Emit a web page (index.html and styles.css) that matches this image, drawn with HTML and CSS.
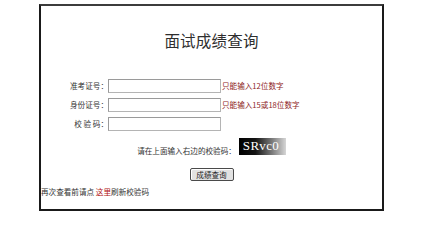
FILE: index.html
```html
<!DOCTYPE html>
<html lang="zh-CN">
<head>
<meta charset="utf-8">
<title>面试成绩查询</title>
<link rel="stylesheet" href="styles.css">
</head>
<body>
<div class="frame">
  <h1 class="title">面试成绩查询</h1>
  <div class="form">
    <div class="row">
      <label class="label">准考证号：</label>
      <input class="field" type="text">
      <span class="hint">只能输入12位数字</span>
    </div>
    <div class="row">
      <label class="label">身份证号：</label>
      <input class="field" type="text">
      <span class="hint">只能输入15或18位数字</span>
    </div>
    <div class="row">
      <label class="label">校&nbsp;验&nbsp;码：</label>
      <input class="field" type="text">
      <span class="hint"></span>
    </div>
  </div>
  <div class="verify">
    <span class="verify-text">请在上面输入右边的校验码：</span>
    <span class="captcha">SRvc0</span>
  </div>
  <div class="submit">
    <button class="btn" type="button">成绩查询</button>
  </div>
  <p class="note">再次查看前请点 <a class="link" href="#">这里</a>刷新校验码</p>
</div>
</body>
</html>
```

FILE: styles.css
```css
html, body {
  margin: 0;
  padding: 0;
  background: #ffffff;
}

body {
  font-family: "Noto Sans CJK SC", "Noto Sans", sans-serif;
  color: #333333;
}

.frame {
  box-sizing: border-box;
  margin: 4px 0 0 39px;
  width: 345px;
  height: 207px;
  border: 2px solid #1a1a1a;
  border-top-color: #3c3c3c;
  background: #ffffff;
}

.title {
  margin: 0;
  padding-top: 26px;
  font-size: 15.5px;
  line-height: 16px;
  font-weight: normal;
  text-align: center;
  color: #2e2e2e;
  letter-spacing: 0.2px;
}

.form {
  margin-top: 28px;
}

.row {
  display: grid;
  grid-template-columns: 67px 113px auto;
  align-items: center;
  height: 19px;
}

.label {
  font-size: 7.6px;
  line-height: 9px;
  text-align: right;
  color: #333333;
}

.field {
  box-sizing: border-box;
  width: 113px;
  height: 14px;
  margin: 0;
  padding: 0;
  border: 1px solid #b4b4b4;
  border-top-color: #9a9a9a;
  border-left-color: #9a9a9a;
  background: #ffffff;
}

.hint {
  padding-left: 1px;
  font-size: 7.6px;
  line-height: 9px;
  color: #8e2424;
  white-space: nowrap;
}

.verify {
  margin-top: 5px;
  display: flex;
  justify-content: center;
  align-items: flex-end;
  gap: 3px;
}

.verify-text {
  font-size: 7.6px;
  line-height: 9px;
  color: #333333;
}

.captcha {
  box-sizing: border-box;
  width: 47px;
  height: 17px;
  padding-left: 4px;
  background: linear-gradient(to right, #000000 0%, #141414 35%, #7a7a7a 70%, #d6d6d6 100%);
  color: #ffffff;
  font-family: "Liberation Serif", "DejaVu Serif", serif;
  font-size: 13px;
  line-height: 16px;
  letter-spacing: 0.3px;
}

.submit {
  margin-top: 13px;
  display: flex;
  justify-content: center;
}

.btn {
  box-sizing: border-box;
  width: 44px;
  height: 13px;
  margin: 0;
  padding: 0;
  border: 1px solid #4a4a4a;
  border-radius: 2px;
  background: #e2e2e2;
  box-shadow: inset 1px 1px 0 #ffffff;
  font-family: "Noto Sans CJK SC", "Noto Sans", sans-serif;
  font-size: 7.6px;
  line-height: 11px;
  color: #222222;
}

.note {
  margin: 6px 0 0 0;
  font-size: 7.6px;
  line-height: 9px;
  color: #333333;
}

.link {
  color: #b01010;
  text-decoration: none;
}
```
